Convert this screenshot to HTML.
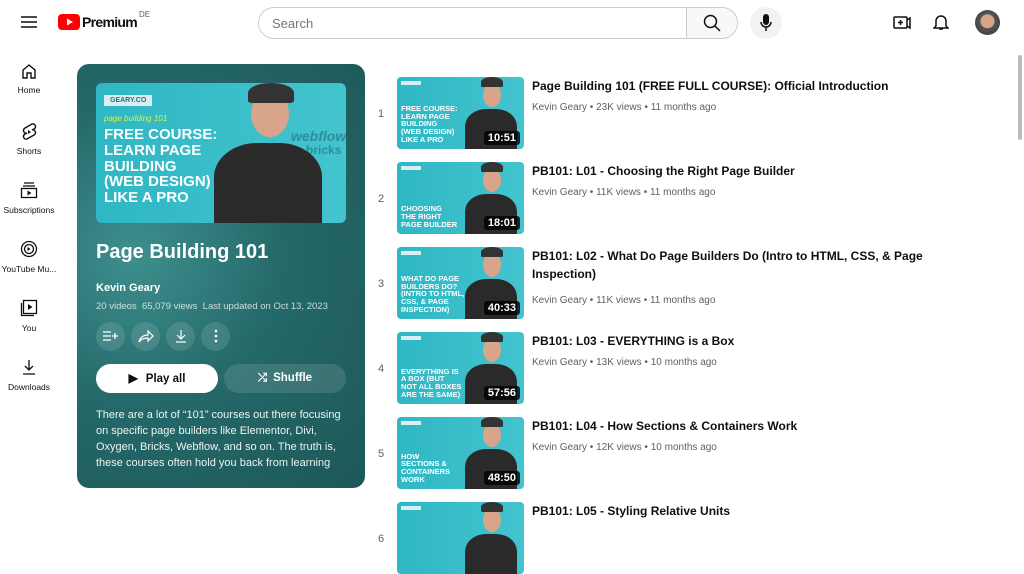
<!DOCTYPE html>
<html><head><meta charset="utf-8"><style>
*{margin:0;padding:0;box-sizing:border-box}
body{width:1024px;height:507px;overflow:hidden;background:#fff;font-family:"Liberation Sans",Arial,sans-serif;color:#0f0f0f;position:relative}
.a{position:absolute}
.nav{position:absolute;left:0;width:58px;text-align:center;font-size:8.5px;color:#0f0f0f}
.nav svg{display:block;margin:0 auto 6px}
.card{left:77px;top:64px;width:288px;height:424px;border-radius:12px;background:radial-gradient(ellipse at 20% 45%,#3e8f8f 0%,#25696a 45%,#1c5758 100%);color:#fff}
.th{position:absolute;background:linear-gradient(90deg,#2fb7c4,#43c4cf);overflow:hidden;border-radius:6px}
.th .t{position:absolute;color:#fff;font-weight:bold;line-height:1.05}
.th .p{position:absolute;background:#2a2a2a;border-radius:40% 40% 0 0}
.th .h{position:absolute;background:#d9a58a;border-radius:50%}
.th .c{position:absolute;background:#333;border-radius:50% 50% 10% 10%}
.dur{position:absolute;right:4px;bottom:4px;background:rgba(0,0,0,.8);color:#fff;font-size:11px;font-weight:bold;padding:1px 4px;border-radius:3px}
.row .n{position:absolute;left:378px;font-size:11px;color:#606060}
.ti{position:absolute;left:532px;font-size:12px;font-weight:bold;color:#0f0f0f;line-height:18px;width:410px}
.me{position:absolute;left:532px;font-size:10px;color:#606060}
.ib{position:absolute;width:29px;height:29px;border-radius:50%;background:rgba(255,255,255,.12);top:322px}
</style></head><body>
<svg class="a" style="left:21px;top:15px" width="16" height="14"><path d="M0 2h16M0 7h16M0 12h16" stroke="#0f0f0f" stroke-width="1.5"/></svg>
<svg class="a" style="left:58px;top:14px" width="22" height="16"><rect width="22" height="16" rx="4" fill="#f00"/><path d="M9 4.5v7l6-3.5z" fill="#fff"/></svg>
<div class="a" style="left:82px;top:14px;font-size:14px;font-weight:bold;letter-spacing:-.7px">Premium</div>
<div class="a" style="left:139px;top:10px;font-size:8px;color:#606060">DE</div>
<div class="a" style="left:258px;top:7px;width:429px;height:32px;border:1px solid #ccc;border-radius:16px 0 0 16px;font-size:13px;color:#777;padding:8px 13px">Search</div>
<div class="a" style="left:686px;top:7px;width:52px;height:32px;border:1px solid #ccc;border-radius:0 16px 16px 0;background:#f8f8f8"></div>
<svg class="a" style="left:703px;top:14px" width="18" height="18"><circle cx="7.5" cy="7.5" r="6" fill="none" stroke="#0f0f0f" stroke-width="1.5"/><path d="M12 12l5 5" stroke="#0f0f0f" stroke-width="1.5"/></svg>
<div class="a" style="left:750px;top:7px;width:32px;height:32px;border-radius:50%;background:#f2f2f2"></div>
<svg class="a" style="left:760px;top:14px" width="12" height="18"><rect x="3" y="0" width="6" height="11" rx="3" fill="#0f0f0f"/><path d="M1 8a5 5 0 0 0 10 0M6 13v4" stroke="#0f0f0f" stroke-width="1.5" fill="none"/></svg>
<svg class="a" style="left:893px;top:14px" width="18" height="16"><rect x="1" y="3" width="13" height="11" rx="1" fill="none" stroke="#0f0f0f" stroke-width="1.5"/><path d="M14 6l3-2v10l-3-2M7.5 6v5M5 8.5h5" stroke="#0f0f0f" stroke-width="1.5" fill="none"/></svg>
<svg class="a" style="left:933px;top:13px" width="16" height="18"><path d="M3 13V8a5 5 0 0 1 10 0v5l2 2H1zM6 16h4" stroke="#0f0f0f" stroke-width="1.5" fill="none"/></svg>
<div class="a" style="left:975px;top:10px;width:25px;height:25px;border-radius:50%;background:radial-gradient(circle at 50% 45%,#d9a58a 35%,#555 40%,#333)"></div>
<div class="nav" style="top:63px"><svg width="16" height="16"><path d="M2 7l6-5 6 5v8H10v-5H6v5H2z" fill="none" stroke="#0f0f0f" stroke-width="1.4"/></svg>Home</div>
<div class="nav" style="top:122px"><svg width="16" height="18"><path d="M11 2L4 6c-3 2-1 6 2 5l-2 1c-3 2-1 6 2 5l7-4c3-2 1-6-2-5l2-1c3-2 1-6-2-5z" fill="none" stroke="#0f0f0f" stroke-width="1.4"/><path d="M7 8v4l3-2z" fill="#0f0f0f"/></svg>Shorts</div>
<div class="nav" style="top:181px"><svg width="18" height="18"><path d="M4 2h10M3 5h12" stroke="#0f0f0f" stroke-width="1.3"/><rect x="1.5" y="7.5" width="15" height="9" fill="none" stroke="#0f0f0f" stroke-width="1.3"/><path d="M7.5 9.5v5l4-2.5z" fill="#0f0f0f"/></svg>Subscriptions</div>
<div class="nav" style="top:240px"><svg width="18" height="18"><circle cx="9" cy="9" r="7.5" fill="none" stroke="#0f0f0f" stroke-width="1.3"/><circle cx="9" cy="9" r="4.5" fill="none" stroke="#0f0f0f" stroke-width="1.3"/><path d="M7.5 7v4l3-2z" fill="#0f0f0f"/></svg>YouTube Mu...</div>
<div class="nav" style="top:299px"><svg width="18" height="18"><rect x="3.5" y="1.5" width="13" height="13" fill="none" stroke="#0f0f0f" stroke-width="1.3"/><path d="M1.5 4v12.5H14" fill="none" stroke="#0f0f0f" stroke-width="1.3"/><path d="M8 5v6l4.5-3z" fill="#0f0f0f"/></svg>You</div>
<div class="nav" style="top:358px"><svg width="16" height="18"><path d="M8 2v10M4 8l4 4 4-4M2 16h12" fill="none" stroke="#0f0f0f" stroke-width="1.3"/></svg>Downloads</div>
<div class="a card">
 <div class="th" style="left:19px;top:19px;width:250px;height:140px">
  <div class="a" style="left:8px;top:12px;background:#d8eef0;color:#2a6f74;font-size:7px;font-weight:bold;padding:2px 6px">GEARY.CO</div>
  <div class="a" style="left:8px;top:31px;color:#d7f24a;font-size:8px;font-style:italic">page building 101</div>
  <div class="t" style="left:8px;top:44px;font-size:15px">FREE COURSE:<br>LEARN PAGE<br>BUILDING<br>(WEB DESIGN)<br>LIKE A PRO</div>
  <div class="a" style="left:195px;top:45px;color:#2a8f99;font-size:14px;font-weight:bold;font-style:italic">webflow</div>
  <div class="a" style="left:210px;top:60px;color:#2a8f99;font-size:12px;font-weight:bold">bricks</div>
  <div class="p" style="left:118px;top:60px;width:108px;height:85px"></div>
  <div class="h" style="left:155px;top:8px;width:38px;height:46px"></div>
  <div class="c" style="left:152px;top:0;width:46px;height:20px"></div>
 </div>
 <div class="a" style="left:19px;top:177px;font-size:20px;font-weight:bold">Page Building 101</div>
 <div class="a" style="left:19px;top:218px;font-size:11px;font-weight:bold">Kevin Geary</div>
 <div class="a" style="left:19px;top:237px;font-size:9.5px;color:rgba(255,255,255,.75)">20 videos&nbsp;&nbsp;65,079 views&nbsp;&nbsp;Last updated on Oct 13, 2023</div>
 <div class="ib" style="left:19px;top:258px"></div><div class="ib" style="left:54px;top:258px"></div><div class="ib" style="left:89px;top:258px"></div><div class="ib" style="left:124px;top:258px"></div>
 <svg class="a" style="left:26px;top:266px" width="16" height="12"><path d="M0 2h8M0 6h8M0 10h8M9 6h6M12 3v6" stroke="#fff" stroke-width="1.3"/></svg>
 <svg class="a" style="left:61px;top:265px" width="16" height="14"><path d="M1 13c1-5 5-7 9-7V2l5 5-5 5V9c-4 0-7 1-9 4z" fill="none" stroke="#fff" stroke-width="1.2"/></svg>
 <svg class="a" style="left:98px;top:265px" width="12" height="14"><path d="M6 1v9M2 6l4 4 4-4M1 13h10" fill="none" stroke="#fff" stroke-width="1.2"/></svg>
 <svg class="a" style="left:137px;top:265px" width="4" height="14"><circle cx="2" cy="2" r="1.3" fill="#fff"/><circle cx="2" cy="7" r="1.3" fill="#fff"/><circle cx="2" cy="12" r="1.3" fill="#fff"/></svg>
 <div class="a" style="left:19px;top:300px;width:122px;height:29px;border-radius:15px;background:#fff;color:#0f0f0f;font-size:11.5px;font-weight:bold;text-align:center;line-height:29px"><span style="font-size:12px;margin-right:8px">&#9654;</span>Play all</div>
 <div class="a" style="left:147px;top:300px;width:122px;height:29px;border-radius:15px;background:rgba(255,255,255,.12);font-size:11.5px;font-weight:bold;text-align:center;line-height:29px"><span style="margin-right:6px">&#10542;</span>Shuffle</div>
 <div class="a" style="left:19px;top:343px;width:255px;font-size:11px;line-height:16px;color:rgba(255,255,255,.92)">There are a lot of “101” courses out there focusing on specific page builders like Elementor, Divi, Oxygen, Bricks, Webflow, and so on. The truth is, these courses often hold you back from learning</div>
</div>
<div id="list"></div>
<script>
var d=[["Page Building 101 (FREE FULL COURSE): Official Introduction","23K views • 11 months ago","10:51","FREE COURSE:<br>LEARN PAGE<br>BUILDING<br>(WEB DESIGN)<br>LIKE A PRO"],
["PB101: L01 - Choosing the Right Page Builder","11K views • 11 months ago","18:01","CHOOSING<br>THE RIGHT<br>PAGE BUILDER"],
["PB101: L02 - What Do Page Builders Do (Intro to HTML, CSS, &amp; Page Inspection)","11K views • 11 months ago","40:33","WHAT DO PAGE<br>BUILDERS DO?<br>(INTRO TO HTML,<br>CSS, &amp; PAGE<br>INSPECTION)"],
["PB101: L03 - EVERYTHING is a Box","13K views • 10 months ago","57:56","EVERYTHING IS<br>A BOX (BUT<br>NOT ALL BOXES<br>ARE THE SAME)"],
["PB101: L04 - How Sections &amp; Containers Work","12K views • 10 months ago","48:50","HOW<br>SECTIONS &amp;<br>CONTAINERS<br>WORK"],
["PB101: L05 - Styling Relative Units","","",""]];
var h="";d.forEach(function(r,i){var y=77+i*85;var two=i==2;
h+='<div class="row"><div class="n" style="top:'+(y+31)+'px">'+(i+1)+'</div><div class="th" style="left:397px;top:'+y+'px;width:127px;height:72px;border-radius:4px"><div class="a" style="left:4px;top:4px;width:20px;height:4px;background:#d8eef0"></div><div class="t" style="left:4px;bottom:5px;font-size:7.5px">'+r[3]+'</div><div class="p" style="left:68px;top:32px;width:52px;height:44px"></div><div class="h" style="left:86px;top:6px;width:18px;height:24px"></div><div class="c" style="left:84px;top:0;width:22px;height:10px"></div>'+(r[2]?'<div class="dur">'+r[2]+'</div>':'')+'</div><div class="ti" style="top:'+(y)+'px">'+r[0]+'</div>'+(r[1]?'<div class="me" style="top:'+(y+(two?48:25))+'px">Kevin Geary • '+r[1]+'</div>':'')+'</div>';});
document.getElementById("list").innerHTML=h;
</script>
<div class="a" style="left:1018px;top:55px;width:4px;height:85px;background:#bbb;border-radius:2px"></div>
</body></html>
